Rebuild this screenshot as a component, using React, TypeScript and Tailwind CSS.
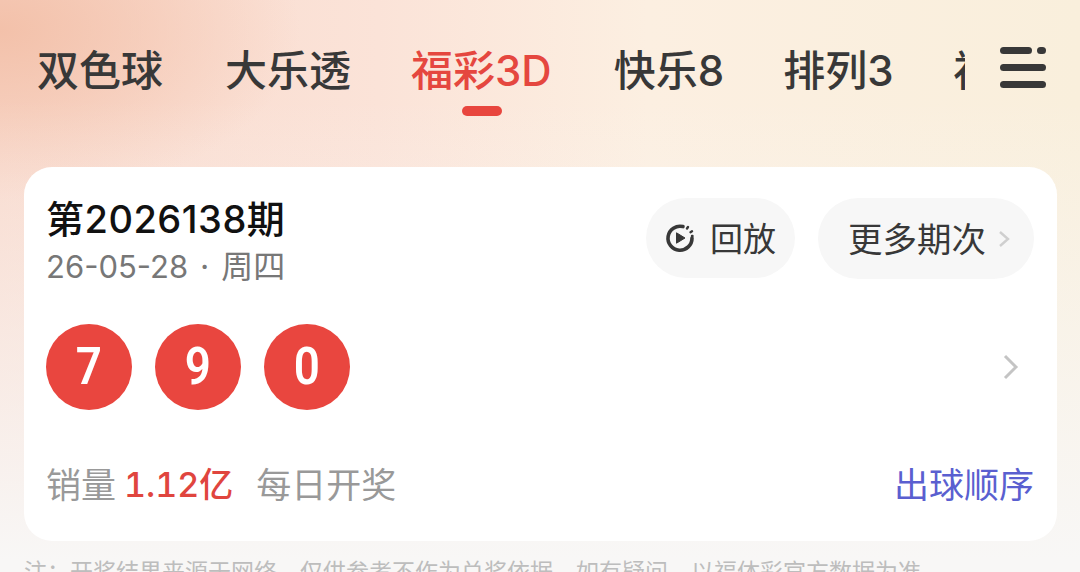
import React from "react";

const font = "[font-family:'Inter','Noto_Sans_CJK_SC',sans-serif]";

function Tab({ label, active, className }: { label: string; active?: boolean; className?: string }) {
  return (
    <div className={`relative shrink-0 text-[42px] leading-[56px] font-medium ${active ? "text-[#e5473f]" : "text-[#383838]"} ${className ?? ""}`}>
      {label}
      {active && <div className="absolute left-1/2 top-[63px] ml-[1px] h-[10px] w-[40px] -translate-x-1/2 rounded-full bg-[#e8463e]" />}
    </div>
  );
}

function Ball({ n }: { n: string }) {
  return (
    <div className="flex h-[86px] w-[86px] items-center justify-center rounded-full bg-[#e9463f] font-['Roboto',sans-serif] text-[52px] font-semibold text-white">
      <span className="scale-x-[0.88]">{n}</span>
    </div>
  );
}

export default function App() {
  return (
    <div className={`h-[572px] w-[1080px] overflow-hidden bg-[linear-gradient(to_bottom,transparent_0px,transparent_100px,#f8f7f6_560px),radial-gradient(ellipse_300px_170px_at_0px_30px,#f3c1aa,transparent),linear-gradient(to_right,#f9d9cc_0%,#fbe3d8_35%,#fcefe1_60%,#f9efdc_100%)] ${font}`}>
      <div className="flex h-[167px] pt-[43px]">
        <div className="flex h-[90px] w-[965px] overflow-hidden pl-[37px]">
          <Tab label="双色球" />
          <Tab label="大乐透" className="ml-[62px]" />
          <Tab label="福彩3D" active className="ml-[60px]" />
          <Tab label="快乐8" className="ml-[62px]" />
          <Tab label="排列3" className="ml-[59px]" />
          <Tab label="福彩15选5" className="ml-[60px]" />
        </div>
        <svg className="ml-[35px] mt-[4px]" width="46" height="41" viewBox="0 0 46 41" fill="#383838">
          <rect x="0" y="0" width="32" height="7" rx="3.5" />
          <rect x="37" y="0" width="9" height="7" rx="3.5" />
          <rect x="0" y="17" width="46" height="7" rx="3.5" />
          <rect x="0" y="34" width="46" height="7" rx="3.5" />
        </svg>
      </div>

      <div className="ml-[24px] flex h-[374px] w-[1033px] flex-col rounded-[28px] bg-white pl-[22px] pr-[23px]">
        <div className="flex h-[113px] items-start justify-between">
          <div className="pt-[26px]">
            <div className="text-[38px] leading-[52px] font-medium tracking-[0.5px] text-[#111111]">第2026138期</div>
            <div className="-mt-[1px] flex text-[32px] leading-[46px] text-[#777777]">
              <span className="text-[31px]">26-05-28</span>
              <span className="ml-[12px]">·</span>
              <span className="ml-[12px]">周四</span>
            </div>
          </div>
          <div className="flex gap-[23px] pt-[31px]">
            <div className="flex h-[80px] w-[149px] items-center rounded-full bg-[#f7f7f7] pl-[19px] text-[33px] text-[#383838]">
              <svg width="30" height="30" viewBox="0 0 30 30" fill="none" stroke="#383838">
                <path d="M18 3.6A12 12 0 1 0 27 15" strokeWidth="3.6" strokeLinecap="round" />
                <path d="M22 5.5l1-1.5M25.5 9.2l1.5-.9M27 13h.5" strokeWidth="2.4" strokeLinecap="round" />
                <path d="M11.5 9.8v10.4L20 15z" fill="#383838" strokeWidth="1" strokeLinejoin="round" />
              </svg>
              <span className="ml-[15px] pt-[3px]">回放</span>
            </div>
            <div className="flex h-[81px] w-[216px] items-center rounded-full bg-[#f7f7f7] pl-[30px] text-[34.5px] text-[#383838]">
              <span className="pt-[3px]">更多期次</span>
              <svg className="ml-[12px]" width="12" height="18" viewBox="0 0 12 18" fill="none" stroke="#cfcfcf" strokeWidth="2.4">
                <path d="M2 2l8 7-8 7" />
              </svg>
            </div>
          </div>
        </div>

        <div className="mt-[44px] flex items-center justify-between">
          <div className="flex gap-[23px]">
            <Ball n="7" />
            <Ball n="9" />
            <Ball n="0" />
          </div>
          <svg className="mr-[15px]" width="16" height="26" viewBox="0 0 16 26" fill="none" stroke="#c4c4c4" strokeWidth="3">
            <path d="M2 2l11 11L2 24" />
          </svg>
        </div>

        <div className="mt-[50px] flex items-center justify-between text-[35px] leading-[50px]">
          <div className="flex text-[#999999]">
            <span>销量</span>
            <span className="ml-[8px] text-[34px] font-medium tabular-nums text-[#e0453e]">1.12亿</span>
            <span className="ml-[23px]">每日开奖</span>
          </div>
          <span className="text-[#5a5fd0]">出球顺序</span>
        </div>
      </div>

      <div className="ml-[24px] mt-[14px] whitespace-nowrap text-[23px] leading-[34px] text-[#bdbdbd]">
        注：开奖结果来源于网络，仅供参考不作为兑奖依据，如有疑问，以福体彩官方数据为准
      </div>
    </div>
  );
}
